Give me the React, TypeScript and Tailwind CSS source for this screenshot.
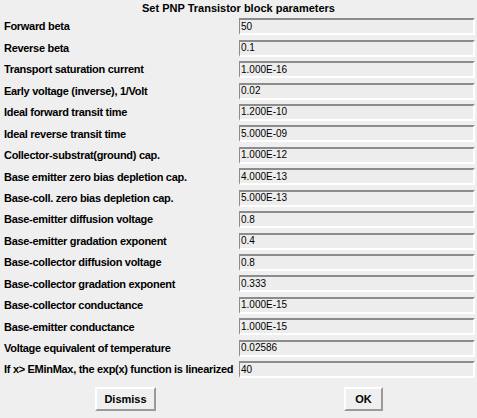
import React from 'react';

const params: [string, string][] = [
  ['Forward beta', '50'],
  ['Reverse beta', '0.1'],
  ['Transport saturation current', '1.000E-16'],
  ['Early voltage (inverse), 1/Volt', '0.02'],
  ['Ideal forward transit time', '1.200E-10'],
  ['Ideal reverse transit time', '5.000E-09'],
  ['Collector-substrat(ground) cap.', '1.000E-12'],
  ['Base emitter zero bias depletion cap.', '4.000E-13'],
  ['Base-coll. zero bias depletion cap.', '5.000E-13'],
  ['Base-emitter diffusion voltage', '0.8'],
  ['Base-emitter gradation exponent', '0.4'],
  ['Base-collector diffusion voltage', '0.8'],
  ['Base-collector gradation exponent', '0.333'],
  ['Base-collector conductance', '1.000E-15'],
  ['Base-emitter conductance', '1.000E-15'],
  ['Voltage equivalent of temperature', '0.02586'],
  ['If x> EMinMax, the exp(x) function is linearized', '40'],
];

const font = { fontFamily: '"Liberation Sans", Arial, sans-serif' };

export default function App() {
  return (
    <div className="w-[477px] h-[418px] bg-[#efefef] text-black overflow-hidden" style={font}>
      <div className="h-[16px] flex items-center justify-center text-[11px] font-bold pt-[1px]">
        Set PNP Transistor block parameters
      </div>
      <div className="flex flex-col">
        {params.map(([label, value]) => (
          <div key={label} className="h-[21.44px] flex items-center pl-[4px] pr-[2px]">
            <div className="w-[235px] shrink-0 text-[11px] font-bold tracking-[-0.3px] whitespace-nowrap overflow-hidden">
              {label}
            </div>
            <div className="flex-1 h-[17px] bg-[#ededed] border-t-2 border-l border-r-2 border-b-2 border-t-[#8c8c8c] border-l-[#8c8c8c] border-r-white border-b-white flex items-center pl-[1px] text-[10px] leading-none">
              {value}
            </div>
          </div>
        ))}
      </div>
      <div className="flex mt-[7px]">
        <button className="ml-[95px] w-[61px] h-[24px] bg-[#efefef] border-t-2 border-l-2 border-r-2 border-b-2 border-t-white border-l-white border-r-[#9a9a9a] border-b-[#9a9a9a] text-[11px] font-bold">
          Dismiss
        </button>
        <button className="ml-[188px] w-[39px] h-[24px] bg-[#efefef] border-t-2 border-l-2 border-r-2 border-b-2 border-t-white border-l-white border-r-[#9a9a9a] border-b-[#9a9a9a] text-[11px] font-bold">
          OK
        </button>
      </div>
    </div>
  );
}
